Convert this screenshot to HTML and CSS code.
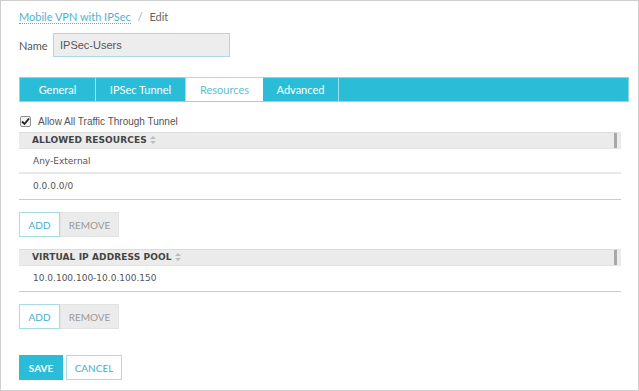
FILE: index.html
```html
<!DOCTYPE html>
<html lang="en">
<head>
    <meta charset="UTF-8">
    <title>Mobile VPN with IPSec - Edit</title>
    <link rel="stylesheet" href="styles.css">
</head>
<body>

<div class="frame">
    <div class="breadcrumb">
        <a class="crumb-link">Mobile VPN with IPSec</a>
        <span class="crumb-sep">/</span>
        <span class="crumb-current">Edit</span>
    </div>

    <div class="name-row">
        <label class="name-label">Name</label>
        <input class="name-input" type="text" value="IPSec-Users">
    </div>

    <div class="tabs">
        <div class="tab tab-general">General</div>
        <div class="tab tab-tunnel">IPSec Tunnel</div>
        <div class="tab tab-resources active">Resources</div>
        <div class="tab tab-advanced">Advanced</div>
        <div class="tab-rest"></div>
    </div>

    <label class="check-row">
        <span class="check-box">
            <svg width="9" height="9" viewBox="0 0 9 9"><path d="M1 4.5 L3.5 7 L8 1.5" fill="none" stroke="#222" stroke-width="1.8"/></svg>
        </span>
        <span>Allow All Traffic Through Tunnel</span>
    </label>

    <div class="grid grid-first">
        <div class="grid-head">ALLOWED RESOURCES
            <svg class="sort" width="6" height="8" viewBox="0 0 6 8"><path d="M0 3 L3 0 L6 3 Z M0 5 L3 8 L6 5 Z" fill="#bbb"/></svg>
        </div>
        <div class="grid-row first">Any-External</div>
        <div class="grid-row last">0.0.0.0/0</div>
    </div>
    <div class="btn-pair">
        <button class="btn-add">ADD</button>
        <button class="btn-remove">REMOVE</button>
    </div>

    <div class="grid">
        <div class="grid-head">VIRTUAL IP ADDRESS POOL
            <svg class="sort" width="6" height="8" viewBox="0 0 6 8"><path d="M0 3 L3 0 L6 3 Z M0 5 L3 8 L6 5 Z" fill="#bbb"/></svg>
        </div>
        <div class="grid-row last">10.0.100.100-10.0.100.150</div>
    </div>
    <div class="btn-pair">
        <button class="btn-add">ADD</button>
        <button class="btn-remove">REMOVE</button>
    </div>

    <div class="form-actions">
        <button class="btn-save">SAVE</button>
        <button class="btn-cancel">CANCEL</button>
    </div>
</div>

</body>
</html>
```

FILE: styles.css
```css
/* page frame */
body {
    margin: 0;
    background: #fff;
    font-family: 'Lato', 'Liberation Sans', sans-serif;
}
.frame {
    box-sizing: border-box;
    width: 639px;
    height: 391px;
    border: 1px solid #cfcfcf;
    padding: 0 10px 0 18px;
    display: flex;
    flex-direction: column;
}

/* breadcrumb */
.breadcrumb {
    margin-top: 9px;
    font-size: 11px;
    height: 14px;
    line-height: 14px;
    color: #666;
}
.crumb-link {
    color: #4fb3cc;
    border-bottom: 1px dotted #4fb3cc;
}
.crumb-sep {
    color: #aaa;
    margin: 0 4px;
}

/* name field */
.name-row {
    display: flex;
    align-items: center;
    margin-top: 9px;
}
.name-label {
    font-size: 11px;
    color: #555;
    width: 34px;
}
.name-input {
    box-sizing: border-box;
    width: 177px;
    height: 24px;
    margin: 0;
    padding: 0 6px;
    border: 1px solid #a9dbe6;
    background: #ededed;
    font-family: 'Liberation Sans', sans-serif;
    font-size: 11px;
    color: #555;
    outline: none;
}

/* tabs */
.tabs {
    display: flex;
    margin-top: 20px;
    width: 610px;
    height: 25px;
    background: #2bbdd7;
    border: 1px solid #8ad7e6;
    box-sizing: border-box;
}
.tab {
    box-sizing: border-box;
    display: flex;
    align-items: center;
    justify-content: center;
    color: #fff;
    font-size: 11px;
    border-right: 1px solid #9fe0ec;
}
.tab-general { width: 76px; }
.tab-tunnel { width: 90px; }
.tab-resources { width: 77px; }
.tab-advanced { width: 76px; }
.tab.active {
    background: #fff;
    color: #5fbdd2;
    margin-top: -1px;
    border-top: 1px solid #a6dde8;
    border-right: none;
}
.tab-rest { flex: 1; }

/* checkbox */
.check-row {
    display: flex;
    align-items: center;
    margin-top: 12px;
    height: 14px;
    font-family: 'Liberation Sans', sans-serif;
    font-size: 10px;
    color: #555;
}
.check-box {
    box-sizing: border-box;
    width: 11px;
    height: 11px;
    margin: 0 7px 0 1px;
    border: 1px solid #8f8f8f;
    border-radius: 2px;
    background: #f4f4f4;
    display: flex;
    align-items: center;
    justify-content: center;
}

/* grids */
.grid {
    width: 602px;
    margin-top: 12px;
    font-family: 'DejaVu Sans', sans-serif;
}
.grid.grid-first {
    margin-top: 4px;
}
.grid-head {
    box-sizing: border-box;
    height: 17px;
    line-height: 15px;
    padding-left: 13px;
    background: #ebebeb;
    border-top: 1px solid #dcdcdc;
    border-bottom: 1px solid #e3e3e3;
    border-right: 4px solid #ebebeb;
    box-shadow: inset -3px 0 0 #a8a8a8;
    font-size: 9px;
    letter-spacing: 0.1px;
    font-weight: bold;
    color: #444;
}
.sort {
    margin-left: 0;
    vertical-align: -1px;
}
.grid-row {
    box-sizing: border-box;
    height: 26px;
    line-height: 24px;
    padding-left: 14px;
    font-size: 9px;
    color: #555;
    border-bottom: 1px solid #ccc;
}
.grid-row.first {
    height: 25px;
    border-bottom: 2px solid #e8e8e8;
}

/* buttons */
button {
    font-family: 'Lato', 'Liberation Sans', sans-serif;
    cursor: pointer;
    margin: 0;
}
.btn-pair {
    display: flex;
    margin-top: 12px;
}
.btn-add,
.btn-remove {
    box-sizing: border-box;
    height: 25px;
    font-size: 10px;
    padding: 0;
}
.btn-add {
    width: 41px;
    background: #fff;
    color: #3eb1ca;
    border: 1px solid #a6dde8;
}
.btn-remove {
    width: 59px;
    background: #ebebeb;
    color: #9a9a9a;
    border: 1px solid #e3e3e3;
}
.form-actions {
    display: flex;
    gap: 3px;
    margin-top: 26px;
}
.btn-save,
.btn-cancel {
    box-sizing: border-box;
    height: 25px;
    font-size: 10px;
    padding: 0;
}
.btn-save {
    width: 44px;
    background: #2bbdd7;
    color: #fff;
    font-weight: bold;
    border: 1px solid #2bbdd7;
}
.btn-cancel {
    width: 56px;
    background: #fff;
    color: #3eb1ca;
    border: 1px solid #a6dde8;
}
```
